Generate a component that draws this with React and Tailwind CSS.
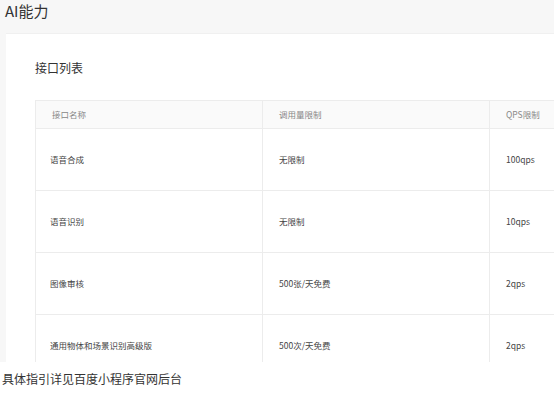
import React from 'react';

const rows = [
  { name: '语音合成', limit: '无限制', qps: '100qps' },
  { name: '语音识别', limit: '无限制', qps: '10qps' },
  { name: '图像审核', limit: '500张/天免费', qps: '2qps' },
  { name: '通用物体和场景识别高级版', limit: '500次/天免费', qps: '2qps' },
];

export default function App() {
  return (
    <div className="w-[554px] h-[413px] bg-white overflow-hidden text-[#333]" style={{ fontFamily: '"Noto Sans CJK SC", "Noto Sans", sans-serif' }}>
      {/* Screenshot area */}
      <div className="h-[362px] overflow-hidden bg-[#f7f7f7] flex flex-col">
        <div className="h-[33px] shrink-0 pl-[5px] pt-[1px] text-[15px] leading-[20px] text-[#333]">AI能力</div>

        {/* Card */}
        <div className="flex-1 ml-[6px] bg-white border-t border-[#f0f0f0] pl-[29px] pt-[26px]">
          <div className="text-[12px] leading-[16px] text-[#333]">接口列表</div>

          {/* Table */}
          <div className="mt-[24px] w-[700px] border-l border-t border-[#ececec]">
            <div className="grid grid-cols-[227px_227px_246px] h-[28px] bg-[#fafafa] border-b border-[#ececec] text-[8.5px] text-[#888]">
              <div className="flex items-center pl-[16px] border-r border-[#ececec]">接口名称</div>
              <div className="flex items-center pl-[16px] border-r border-[#ececec]">调用量限制</div>
              <div className="flex items-center pl-[16px]">QPS限制</div>
            </div>
            {rows.map((r) => (
              <div key={r.name} className="grid grid-cols-[227px_227px_246px] h-[62px] border-b border-[#ececec] text-[8.5px] text-[#444]">
                <div className="flex items-center pl-[14px] border-r border-[#ececec]">{r.name}</div>
                <div className="flex items-center pl-[16px] border-r border-[#ececec]">{r.limit}</div>
                <div className="flex items-center pl-[16px]">{r.qps}</div>
              </div>
            ))}
          </div>
        </div>
      </div>

      <div className="mt-[9px] pl-[2px] text-[12px] leading-[16px] text-[#333]">具体指引详见百度小程序官网后台</div>
    </div>
  );
}
